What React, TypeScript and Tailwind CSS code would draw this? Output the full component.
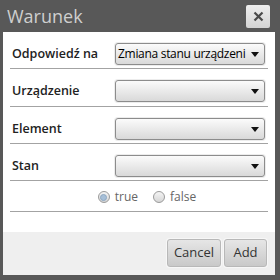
import React from "react";

const font = { fontFamily: '"Open Sans", "Noto Sans", sans-serif' };

function Select({ value }: { value?: string }) {
  return (
    <div className="w-[150px] h-[22px] rounded-[3px] border border-[#8c8c8c] bg-gradient-to-b from-[#fbfbfb] to-[#d9d9d9] shadow-[0_0_0_1px_#ececec] flex items-center pl-[2px] pr-[5px] overflow-hidden">
      <span className="flex-1 whitespace-nowrap text-[12px] tracking-[-0.3px] leading-none text-black">{value}</span>
      <svg width="8" height="5" viewBox="0 0 8 5" className="shrink-0 ml-[2px]">
        <path d="M0 0 H8 L4 5 Z" fill="#111" />
      </svg>
    </div>
  );
}

function Row({ label, value, pb }: { label: string; value?: string; pb: string }) {
  return (
    <div className={`flex items-center pt-[11px] border-b border-[#a3a3a3] ${pb}`}>
      <span className="w-[105px] pl-[2px] text-[12.5px] font-semibold text-[#222] leading-none">{label}</span>
      <Select value={value} />
    </div>
  );
}

function Radio({ checked, label }: { checked?: boolean; label: string }) {
  return (
    <div className="flex items-center gap-[5px]">
      <span className="w-[12px] h-[12px] rounded-full border border-[#9a9a9a] bg-gradient-to-b from-[#f4f4f4] to-[#d6d6d6] flex items-center justify-center">
        {checked && <span className="w-[7px] h-[7px] rounded-full bg-[#a6bfd8] border border-[#8ea8c2]" />}
      </span>
      <span className="text-[12px] text-[#666] leading-none">{label}</span>
    </div>
  );
}

export default function App() {
  return (
    <div style={font} className="w-[280px] h-[280px] bg-[#585858] flex flex-col">
      <div className="h-[32px] flex items-start justify-between pl-[7px] pr-[10px]">
        <span className="text-[18px] leading-none text-[#cfcfcf] mt-[7px]">Warunek</span>
        <div className="mt-[5px] w-[24px] h-[23px] rounded-[2px] bg-gradient-to-b from-[#eeeeee] to-[#d4d4d4] flex items-center justify-center">
          <svg width="11" height="11" viewBox="0 0 11 11">
            <path d="M1.5 1.5 L9.5 9.5 M9.5 1.5 L1.5 9.5" stroke="#4a4a4a" strokeWidth="2.2" />
          </svg>
        </div>
      </div>
      <div className="ml-[3px] mr-[5px] flex-1 bg-white flex flex-col">
        <div className="px-[7px] flex flex-col">
          <Row label="Odpowiedź na" value="Zmiana stanu urządzeni" pb="pb-[3px]" />
          <Row label="Urządzenie" pb="pb-[4px]" />
          <Row label="Element" pb="pb-[3px]" />
          <Row label="Stan" pb="pb-[3px]" />
          <div className="h-[31px] border-b border-[#a3a3a3] flex items-center justify-center gap-[15px] pl-[16px] pt-[2px]">
            <Radio checked label="true" />
            <Radio label="false" />
          </div>
        </div>
        <div className="flex-1" />
        <div className="h-[43px] bg-[#efefef] flex justify-end items-start pt-[7px] pr-[8px] gap-[3px]">
          <button className="w-[54px] h-[28px] rounded-[3px] border border-[#b8b8b8] bg-gradient-to-b from-[#e6e6e6] to-[#c9c9c9] shadow-[0_0_0_1px_#f7f7f7] text-[13px] text-[#333]">Cancel</button>
          <button className="w-[43px] h-[28px] rounded-[3px] border border-[#b8b8b8] bg-gradient-to-b from-[#e6e6e6] to-[#c9c9c9] shadow-[0_0_0_1px_#f7f7f7] text-[13px] text-[#333]">Add</button>
        </div>
      </div>
      <div className="h-[5px]" />
    </div>
  );
}
